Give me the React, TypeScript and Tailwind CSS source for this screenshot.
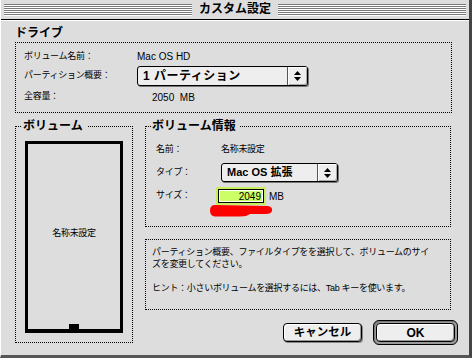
const FONT = "font-['Liberation_Sans','Noto_Sans_CJK_JP',sans-serif]"

// ── Bits ──────────────────────────────────────────────────────────────────────

function Arrows() {
  return (
    <svg width="7" height="10" viewBox="0 0 7 10">
      <polygon points="3.5,0 7,4 0,4" fill="#000" />
      <polygon points="0,6 7,6 3.5,10" fill="#000" />
    </svg>
  )
}

function Popup({ label, w, text }: { label: string; w: string; text: string }) {
  return (
    <div className={`${w} h-full flex border border-black rounded-[3px] bg-[#eeeeee] shadow-[1px_1px_0_#777]`}>
      <div className={`flex-1 flex items-center pl-[5px] font-bold text-black ${text}`}>{label}</div>
      <div className="w-[20px] flex items-center justify-center border-l border-[#555] shadow-[inset_1px_1px_0_#fff,inset_-1px_-1px_0_#aaa] rounded-r-[2px]">
        <Arrows />
      </div>
    </div>
  )
}

function Scribble() {
  return (
    <svg className="absolute left-[209px] top-[204px]" width="64" height="14" viewBox="0 0 64 14">
      <path d="M5,1 L58,2 Q63,3 62,7 Q61,10 56,10 L40,10 Q37,12.5 30,12.5 L5,12.5 Q0,12 0,6.5 Q0,1 5,1 Z" fill="#ff0000" />
    </svg>
  )
}

// ── Dialog ────────────────────────────────────────────────────────────────────

export default function App() {
  return (
    <div className={`relative w-[472px] h-[358px] bg-[#dddddd] flex flex-col border-l border-l-white border-r-[3px] border-r-[#444] border-b-[3px] border-b-[#555] overflow-hidden ${FONT}`}>
      {/* Title bar */}
      <div className="h-[20px] shrink-0 flex items-start gap-[7px] px-[3px] pt-[4px] border-b border-black bg-[#dddddd]">
        <div className="flex-1 h-[12px] bg-[repeating-linear-gradient(#7a7a7a_0_1px,#ffffff_1px_2px)]" />
        <div className="text-[12px] leading-[12px] font-bold text-black -mt-[1px]">カスタム設定</div>
        <div className="flex-1 h-[12px] bg-[repeating-linear-gradient(#7a7a7a_0_1px,#ffffff_1px_2px)]" />
      </div>

      {/* Body */}
      <div className="flex-1 flex flex-col border-t border-white pl-[14px] pr-[17px]">
        <div className="mt-[6px] h-[12px] text-[12px] leading-[12px] font-bold text-black">ドライブ</div>

        <div className="mt-[3px] h-[71px] border border-dotted border-black pl-[8px] pt-[7px] flex flex-col text-[9px] text-black tracking-[-0.3px]">
          <div className="h-[13px] flex items-center">
            <span className="w-[113px]">ボリューム名前：</span>
            <span className="text-[10px] tracking-normal">Mac OS HD</span>
          </div>
          <div className="mt-[3px] h-[20px] flex items-center">
            <span className="w-[113px]">パーティション概要：</span>
            <Popup label="1 パーティション" w="w-[171px]" text="text-[12px] tracking-[0.5px]" />
          </div>
          <div className="mt-[5px] h-[12px] flex items-center">
            <span className="w-[128px]">全容量：</span>
            <span className="text-[10px] tracking-normal whitespace-pre">2050  MB</span>
          </div>
        </div>

        <div className="mt-[7px] flex gap-[12px]">
          {/* Volume map */}
          <fieldset className="w-[118px] h-[223px] border border-dotted border-black flex flex-col">
            <legend className="ml-[5px] pl-[2px] pr-[4px] text-[12px] leading-[12px] font-bold text-black">ボリューム</legend>
            <div className="mt-[9px] ml-[9px] w-[98px] h-[192px] border-[3px] border-b-[4px] border-black flex flex-col">
              <div className="flex-1 flex items-center justify-center text-[9px] text-black tracking-[-0.3px]">名称未設定</div>
              <div className="w-[10px] h-[5px] bg-black self-center" />
            </div>
          </fieldset>

          <div className="w-[306px] flex flex-col">
            {/* Volume info */}
            <fieldset className="h-[107px] border border-dotted border-black flex flex-col pl-[10px] text-[9px] text-black tracking-[-0.3px]">
              <legend className="-ml-[5px] pl-[1px] pr-[4px] text-[12px] leading-[12px] font-bold tracking-normal">ボリューム情報</legend>
              <div className="mt-[12px] h-[12px] flex items-center">
                <span className="w-[65px]">名前：</span>
                <span>名称未設定</span>
              </div>
              <div className="mt-[7px] h-[19px] flex items-center">
                <span className="w-[65px]">タイプ：</span>
                <Popup label="Mac OS 拡張" w="w-[117px]" text="text-[11px] tracking-normal" />
              </div>
              <div className="mt-[5px] h-[18px] flex items-center">
                <span className="w-[60px]">サイズ：</span>
                <div className="w-[50px] h-[18px] bg-[#c6ee5e] p-[2px] rounded-[1px]">
                  <div className="w-full h-full border border-black bg-white p-[1px] flex">
                    <div className="flex-1 bg-[#ccff66] flex items-center justify-end pr-[1px] text-[10px] tracking-normal">2049</div>
                  </div>
                </div>
                <span className="ml-[3px] text-[10px] tracking-normal">MB</span>
              </div>
            </fieldset>

            {/* Help text */}
            <div className="mt-[12px] h-[71px] border border-dotted border-black pl-[6px] pt-[6px] text-[9px] leading-[12px] text-black tracking-[-0.3px] whitespace-nowrap">
              <div>パーティション概要、ファイルタイプをを選択して、ボリュームのサイ</div>
              <div>ズを変更してください。</div>
              <div className="h-[12px]" />
              <div>ヒント：小さいボリュームを選択するには、Tab キーを使います。</div>
            </div>

            {/* Buttons */}
            <div className="mt-[10px] -mr-[7px] flex justify-end items-center gap-[11px]">
              <button className="w-[79px] h-[19px] border border-black rounded-[4px] bg-[#eeeeee] shadow-[inset_1px_1px_0_#fff,inset_-1px_-1px_0_#999,1px_1px_0_#888] text-[11.5px] font-bold text-black flex items-center justify-center">
                キャンセル
              </button>
              <div className="w-[85px] h-[25px] border border-black rounded-[6px] bg-[#9a9a9a] p-[2px] shadow-[inset_1px_1px_0_#777]">
                <button className="w-full h-full border border-black rounded-[4px] bg-[#eeeeee] shadow-[inset_1px_1px_0_#fff,inset_-1px_-1px_0_#999] text-[12px] font-bold text-black flex items-center justify-center">
                  OK
                </button>
              </div>
            </div>
          </div>
        </div>
      </div>

      <Scribble />
    </div>
  )
}
